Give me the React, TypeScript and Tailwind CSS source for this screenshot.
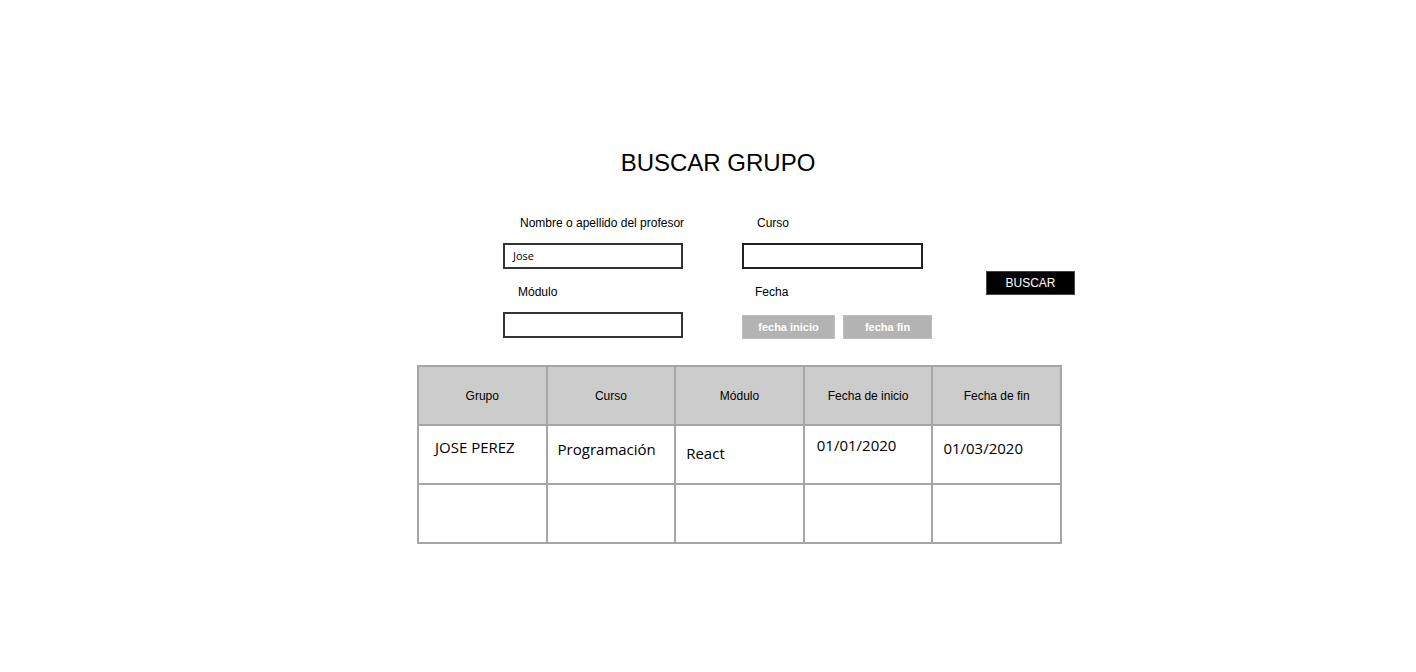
import React from "react";

const rows = [
  [
    { text: "JOSE PEREZ", cls: "pl-[16px] pt-[11px]" },
    { text: "Programación", cls: "pl-[10px] pt-[13px]" },
    { text: "React", cls: "pl-[10px] pt-[17px]" },
    { text: "01/01/2020", cls: "pl-[12px] pt-[9px]" },
    { text: "01/03/2020", cls: "pl-[10px] pt-[12px]" },
  ],
  [
    { text: "", cls: "" },
    { text: "", cls: "" },
    { text: "", cls: "" },
    { text: "", cls: "" },
    { text: "", cls: "" },
  ],
];

const headers = ["Grupo", "Curso", "Módulo", "Fecha de inicio", "Fecha de fin"];

export default function App() {
  return (
    <div className="min-h-screen bg-white pt-[149px] font-['Liberation_Sans',Arial,sans-serif] text-black">
      <div className="ml-[417px] w-[660px]">
        {/* title */}
        <h1 className="w-[602px] text-center text-[24px] leading-[28px] font-normal">BUSCAR GRUPO</h1>

        {/* search form */}
        <div className="mt-[38px] flex pl-[86px]">
          <div className="flex w-[180px] flex-col">
            <label className="h-[16px] whitespace-nowrap pl-[17px] text-[12px] leading-[16px]">Nombre o apellido del profesor</label>
            <div className="mt-[12px] flex h-[26px] items-center border-2 border-[#333] pl-[8px] font-['Open_Sans',sans-serif] text-[11px]">
              Jose
            </div>
            <label className="mt-[15px] h-[16px] pl-[15px] text-[12px] leading-[16px]">Módulo</label>
            <div className="mt-[12px] h-[26px] border-2 border-[#333]" />
          </div>

          <div className="ml-[59px] flex w-[190px] flex-col">
            <label className="h-[16px] pl-[15px] text-[12px] leading-[16px]">Curso</label>
            <div className="mt-[12px] h-[26px] w-[181px] border-2 border-[#222]" />
            <label className="mt-[15px] h-[16px] pl-[13px] text-[12px] leading-[16px]">Fecha</label>
            <div className="mt-[15px] flex gap-[8px]">
              <button className="flex h-[24px] w-[93px] items-center justify-center border border-[#bdbdbd] bg-[#b3b3b3] text-[11px] font-bold text-white">
                fecha inicio
              </button>
              <button className="flex h-[24px] w-[89px] items-center justify-center border border-[#bdbdbd] bg-[#b3b3b3] text-[11px] font-bold text-white">
                fecha fin
              </button>
            </div>
          </div>

          <div className="ml-[54px] mt-[56px]">
            <button className="flex h-[24px] w-[89px] items-center justify-center border border-[#444] bg-black text-[12px] text-white">
              BUSCAR
            </button>
          </div>
        </div>

        {/* results */}
        <div className="mt-[26px] grid w-[645px] grid-cols-5 border-l-2 border-t-2 border-[#a6a6a6]">
          {headers.map((h) => (
            <div
              key={h}
              className="flex h-[59px] items-center justify-center border-b-2 border-r-2 border-[#a6a6a6] bg-[#cccccc] text-[12px] leading-[16px]"
            >
              {h}
            </div>
          ))}
          {rows.map((row, i) =>
            row.map((c, j) => (
              <div
                key={`${i}-${j}`}
                className={`h-[59px] border-b-2 border-r-2 border-[#a6a6a6] font-['Open_Sans',sans-serif] text-[15px] leading-[20px] ${c.cls}`}
              >
                {c.text}
              </div>
            ))
          )}
        </div>
      </div>
    </div>
  );
}
